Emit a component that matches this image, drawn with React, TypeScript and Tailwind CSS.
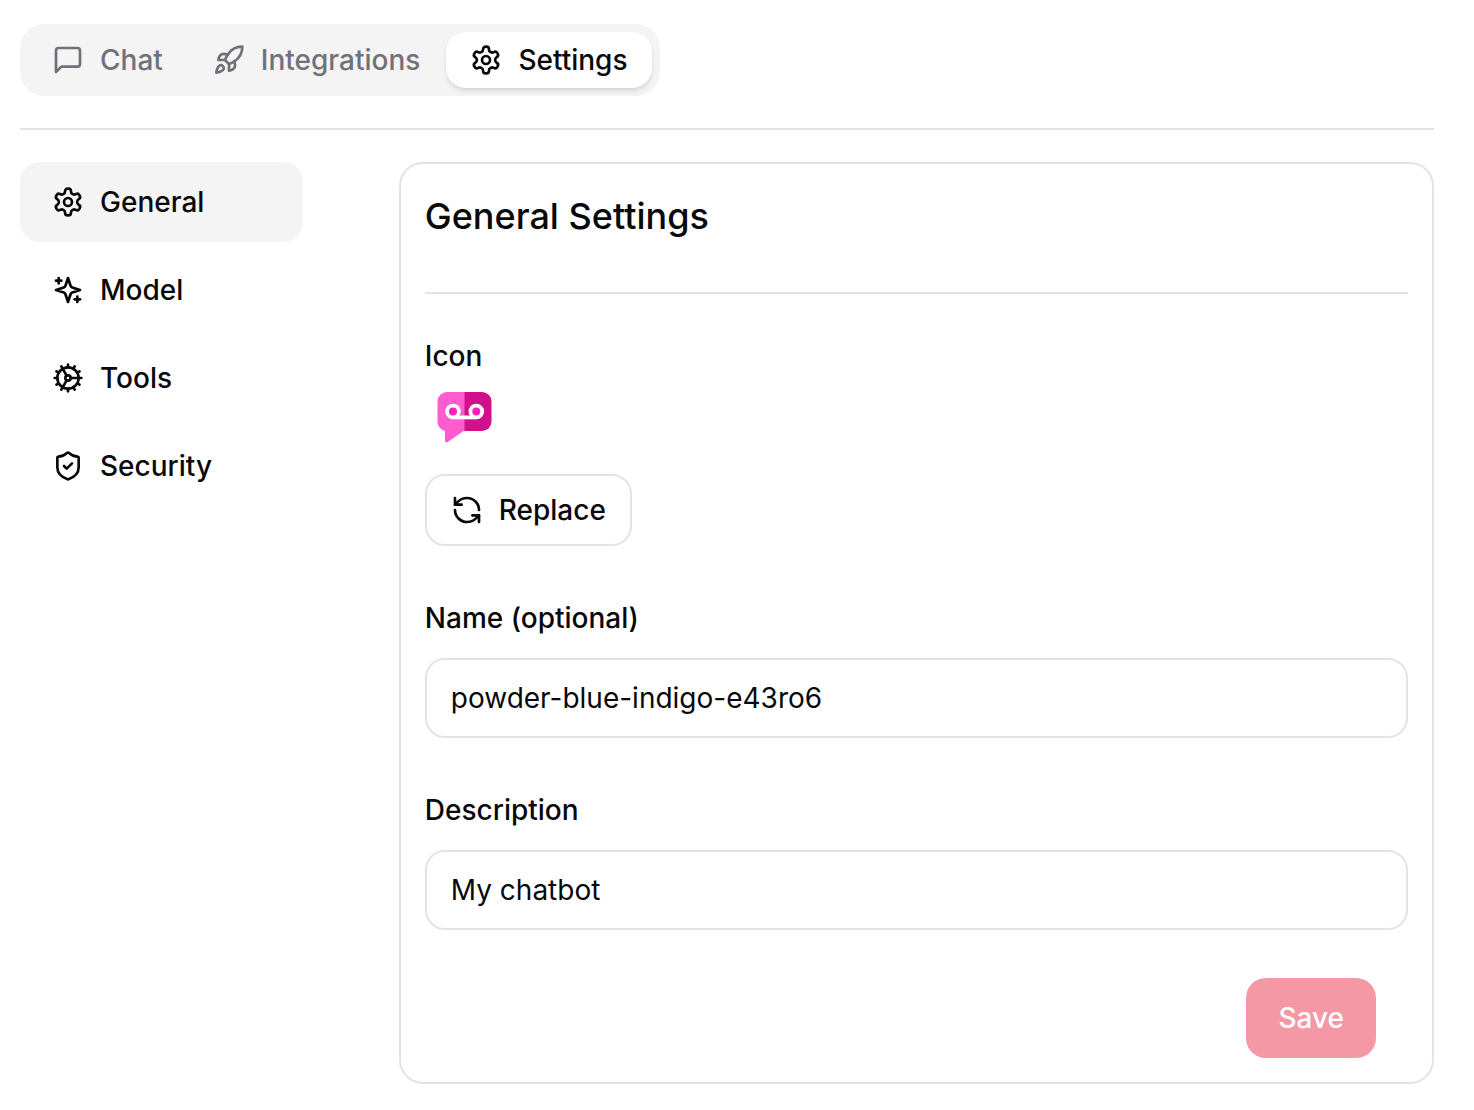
import { clsx } from "clsx";
import { Cog, RefreshCcw, Rocket, ShieldCheck } from "lucide-react";
import { useState } from "react";
import type { ComponentType, ReactNode } from "react";

type IconProps = { className?: string };

function StrokeIcon({ className, children }: IconProps & { children: ReactNode }) {
	return (
		<svg
			viewBox="0 0 24 24"
			fill="none"
			stroke="currentColor"
			strokeWidth="2"
			strokeLinecap="round"
			strokeLinejoin="round"
			className={className}
			aria-hidden="true"
		>
			{children}
		</svg>
	);
}

function ChatIcon({ className }: IconProps) {
	return (
		<StrokeIcon className={className}>
			<path d="M21 15a2 2 0 0 1-2 2H7l-4 4V5a2 2 0 0 1 2-2h14a2 2 0 0 1 2 2z" />
		</StrokeIcon>
	);
}

function GearIcon({ className }: IconProps) {
	return (
		<StrokeIcon className={className}>
			<path d="M12.22 2h-.44a2 2 0 0 0-2 2v.18a2 2 0 0 1-1 1.73l-.43.25a2 2 0 0 1-2 0l-.15-.08a2 2 0 0 0-2.73.73l-.22.38a2 2 0 0 0 .73 2.73l.15.1a2 2 0 0 1 1 1.72v.51a2 2 0 0 1-1 1.74l-.15.09a2 2 0 0 0-.73 2.73l.22.38a2 2 0 0 0 2.73.73l.15-.08a2 2 0 0 1 2 0l.43.25a2 2 0 0 1 1 1.73V20a2 2 0 0 0 2 2h.44a2 2 0 0 0 2-2v-.18a2 2 0 0 1 1-1.73l.43-.25a2 2 0 0 1 2 0l.15.08a2 2 0 0 0 2.73-.73l.22-.39a2 2 0 0 0-.73-2.73l-.15-.08a2 2 0 0 1-1-1.74v-.5a2 2 0 0 1 1-1.74l.15-.09a2 2 0 0 0 .73-2.73l-.22-.38a2 2 0 0 0-2.73-.73l-.15.08a2 2 0 0 1-2 0l-.43-.25a2 2 0 0 1-1-1.73V4a2 2 0 0 0-2-2z" />
			<circle cx="12" cy="12" r="3" />
		</StrokeIcon>
	);
}

function SparklesIcon({ className }: IconProps) {
	return (
		<StrokeIcon className={className}>
			<path d="m12 3-1.912 5.813a2 2 0 0 1-1.275 1.275L3 12l5.813 1.912a2 2 0 0 1 1.275 1.275L12 21l1.912-5.813a2 2 0 0 1 1.275-1.275L21 12l-5.813-1.912a2 2 0 0 1-1.275-1.275L12 3Z" />
			<path d="M5 3v4" />
			<path d="M19 17v4" />
			<path d="M3 5h4" />
			<path d="M17 19h4" />
		</StrokeIcon>
	);
}

function BotLogo({ className }: IconProps) {
	return (
		<svg viewBox="0 0 80 80" className={className} role="img" aria-label="Chatbot icon">
			<path
				d="M40 14H22a9.500 9.500 0 0 0-9.500 9.500v20a9.500 9.500 0 0 0 7.500 9.300V63a1.500 1.500 0 0 0 2.400 1.200L39 52.800h1z"
				fill="#ff5cd0"
			/>
			<path
				d="M39.500 14H57a9.500 9.500 0 0 1 9.500 9.500v20a9.500 9.500 0 0 1-9.500 9.500H39.500z"
				fill="#d0118b"
			/>
			<g fill="#ff1fbc" stroke="#fff" strokeWidth="3.800">
				<path d="M28 39.400h23" />
				<circle cx="28" cy="33.500" r="5.900" />
				<circle cx="51.300" cy="33.500" r="5.900" />
			</g>
		</svg>
	);
}

type NavItem = { id: string; label: string; icon: ComponentType<IconProps> };

const tabs: NavItem[] = [
	{ id: "chat", label: "Chat", icon: ChatIcon },
	{ id: "integrations", label: "Integrations", icon: Rocket },
	{ id: "settings", label: "Settings", icon: GearIcon },
];

const sections: NavItem[] = [
	{ id: "general", label: "General", icon: GearIcon },
	{ id: "model", label: "Model", icon: SparklesIcon },
	{ id: "tools", label: "Tools", icon: Cog },
	{ id: "security", label: "Security", icon: ShieldCheck },
];

function TextField({
	id,
	label,
	value,
	onChange,
}: {
	id: string;
	label: string;
	value: string;
	onChange: (value: string) => void;
}) {
	return (
		<div className="flex flex-col gap-4">
			<label htmlFor={id} className="font-medium leading-12">
				{label}
			</label>
			<input
				id={id}
				type="text"
				value={value}
				onChange={(e) => onChange(e.target.value)}
				className="h-20 w-full rounded-[20px] border-2 border-[#e4e4e4] bg-white px-6 outline-none focus-visible:border-zinc-400"
			/>
		</div>
	);
}

export default function App() {
	const [tab, setTab] = useState("settings");
	const [section, setSection] = useState("general");
	const [name, setName] = useState("powder-blue-indigo-e43ro6");
	const [description, setDescription] = useState("My chatbot");

	return (
		<div className="min-h-screen bg-white pt-6 pr-10 pb-6 pl-5 font-['Inter',sans-serif] text-[28px] text-zinc-950 leading-10">
			<div className="border-[#e4e4e4] border-b-2 pb-8">
				<div
					role="tablist"
					className="inline-flex gap-0.5 rounded-[24px] bg-[#f4f4f4] p-2 align-top"
				>
					{tabs.map(({ id, label, icon: Icon }) => (
						<button
							key={id}
							type="button"
							role="tab"
							aria-selected={tab === id}
							onClick={() => setTab(id)}
							className={clsx(
								"flex items-center gap-4 rounded-[20px] px-6 py-2 font-medium",
								tab === id ? "bg-white shadow-md" : "text-zinc-500",
							)}
						>
							<Icon className="size-8" />
							{label}
						</button>
					))}
				</div>
			</div>

			<div className="mt-8 flex items-start gap-24">
				<nav className="flex w-1/5 shrink-0 flex-col gap-2">
					{sections.map(({ id, label, icon: Icon }) => (
						<button
							key={id}
							type="button"
							onClick={() => setSection(id)}
							className={clsx(
								"flex h-20 items-center gap-4 rounded-[20px] px-8 font-medium",
								section === id && "bg-[#f4f4f4]",
							)}
						>
							<Icon className="size-8" />
							{label}
						</button>
					))}
				</nav>

				<form
					onSubmit={(e) => e.preventDefault()}
					className="flex min-w-0 flex-1 flex-col gap-12 rounded-[24px] border-2 border-[#e4e4e4] p-6"
				>
					<h2 className="border-[#e4e4e4] border-b-2 pb-12 font-medium text-4xl leading-14">
						General Settings
					</h2>

					<div className="flex flex-col items-start">
						<span className="font-medium leading-7">Icon</span>
						<BotLogo className="mt-2 size-20" />
						<button
							type="button"
							className="mt-4 flex h-18 items-center gap-4 rounded-[20px] border-2 border-[#e4e4e4] px-6 font-medium"
						>
							<RefreshCcw className="size-8" />
							Replace
						</button>
					</div>

					<TextField
						id="name"
						label="Name (optional)"
						value={name}
						onChange={setName}
					/>
					<TextField
						id="description"
						label="Description"
						value={description}
						onChange={setDescription}
					/>

					<button
						type="submit"
						className="mr-8 h-20 self-end rounded-[20px] bg-[#f598a5] px-8 font-medium text-white"
					>
						Save
					</button>
				</form>
			</div>
		</div>
	);
}
